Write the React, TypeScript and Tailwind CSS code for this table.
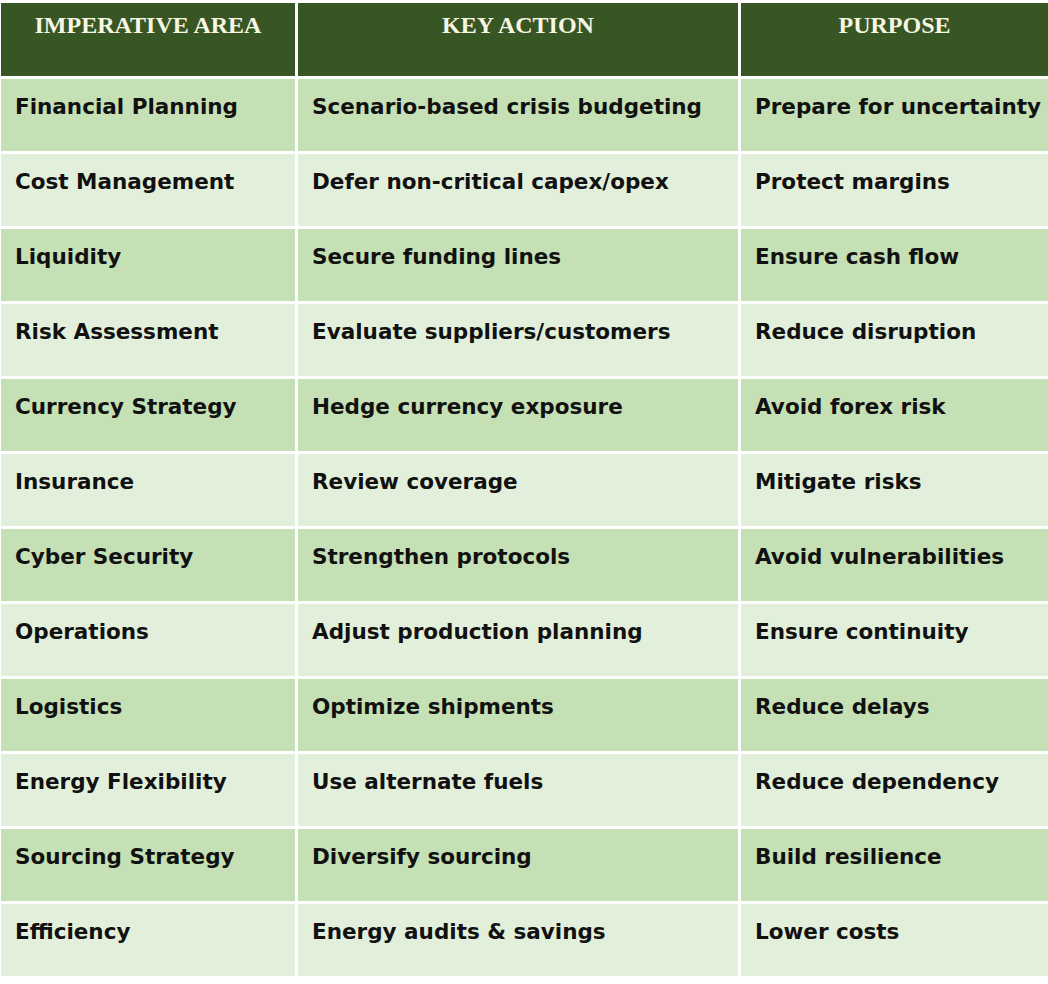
import React from "react";

const rows: [string, string, string][] = [
  ["Financial Planning", "Scenario-based crisis budgeting", "Prepare for uncertainty"],
  ["Cost Management", "Defer non-critical capex/opex", "Protect margins"],
  ["Liquidity", "Secure funding lines", "Ensure cash flow"],
  ["Risk Assessment", "Evaluate suppliers/customers", "Reduce disruption"],
  ["Currency Strategy", "Hedge currency exposure", "Avoid forex risk"],
  ["Insurance", "Review coverage", "Mitigate risks"],
  ["Cyber Security", "Strengthen protocols", "Avoid vulnerabilities"],
  ["Operations", "Adjust production planning", "Ensure continuity"],
  ["Logistics", "Optimize shipments", "Reduce delays"],
  ["Energy Flexibility", "Use alternate fuels", "Reduce dependency"],
  ["Sourcing Strategy", "Diversify sourcing", "Build resilience"],
  ["Efficiency", "Energy audits & savings", "Lower costs"],
];

const headers = ["IMPERATIVE AREA", "KEY ACTION", "PURPOSE"];

export default function App() {
  return (
    <div className="w-[1048px] h-[984px] bg-white pt-[3px] pl-[1px]">
      <div className="grid grid-cols-[294px_440px_307px] gap-x-[3px] gap-y-[3px]">
        {headers.map((h) => (
          <div
            key={h}
            className="h-[73px] bg-[#375623] text-[#f7f5e4] text-center font-bold text-[24px] pt-[8px] leading-[28px]"
            style={{ fontFamily: '"Liberation Serif", serif' }}
          >
            {h}
          </div>
        ))}
        {rows.map((r, i) =>
          r.map((c, j) => (
            <div
              key={i + "-" + j}
              className={
                "h-[72px] pl-[14px] pt-[14px] text-[21.5px] leading-[28px] font-bold text-[#111] " +
                (i % 2 === 0 ? "bg-[#c5e0b4]" : "bg-[#e2efda]")
              }
              style={{ fontFamily: '"DejaVu Sans", sans-serif' }}
            >
              {c}
            </div>
          ))
        )}
      </div>
    </div>
  );
}
